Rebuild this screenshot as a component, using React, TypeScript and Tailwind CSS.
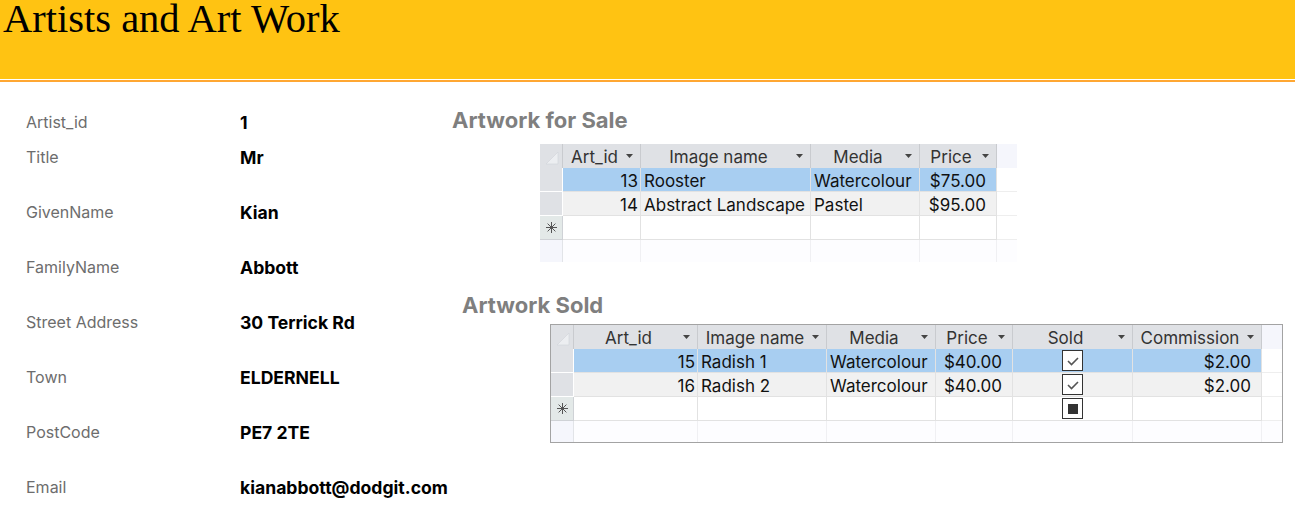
import React from "react";

const ui = "font-['Inter','Liberation_Sans',sans-serif]";

const fields = [
  ["Artist_id", "1"],
  ["Title", "Mr"],
  ["GivenName", "Kian"],
  ["FamilyName", "Abbott"],
  ["Street Address", "30 Terrick Rd"],
  ["Town", "ELDERNELL"],
  ["PostCode", "PE7 2TE"],
  ["Email", "kianabbott@dodgit.com"],
];

type Col = { label: string; align: "num" | "text" | "money" | "check" };

const Arrow = () => (
  <svg width="7" height="4" viewBox="0 0 7 4" className="shrink-0">
    <path d="M0 0h7L3.5 4z" fill="#444" />
  </svg>
);

const Corner = () => (
  <svg width="23" height="24" viewBox="0 0 23 24">
    <path d="M18 8v12H6z" fill="#eceef1" stroke="#d0d3d8" strokeWidth="0.6" />
  </svg>
);

const Star = () => (
  <svg width="11" height="11" viewBox="0 0 11 11">
    <g stroke="#555" strokeWidth="1">
      <path d="M5.5 0v11M0 5.5h11M1.6 1.6l7.8 7.8M9.4 1.6l-7.8 7.8" />
    </g>
  </svg>
);

const Check = ({ mark }: { mark: "tick" | "null" }) => (
  <div className="w-[21px] h-[21px] border-[1.5px] border-[#333] bg-white flex items-center justify-center">
    {mark === "tick" ? (
      <svg width="14" height="14" viewBox="0 0 14 14">
        <path d="M2 7l3.5 3.5L12 4" fill="none" stroke="#555" strokeWidth="1.6" />
      </svg>
    ) : (
      <div className="w-[10px] h-[10px] bg-[#333]" />
    )}
  </div>
);

function Sheet({
  cols,
  grid,
  rows,
  lastRow,
}: {
  cols: Col[];
  grid: string;
  rows: (string | boolean)[][];
  lastRow: string;
}) {
  const cell = "h-[24px] border-r border-b border-[#e2e2e2] flex items-center text-[17px] text-[#111] whitespace-nowrap";
  const body = (vals: (string | boolean | null)[], bg: string, newRow: boolean) =>
    cols.map((c, i) => {
      const v = vals[i];
      if (c.align === "check")
        return (
          <div key={i} className={`${cell} ${bg} justify-center`}>
            {newRow ? <Check mark="null" /> : <Check mark="tick" />}
          </div>
        );
      const al =
        c.align === "num" ? "justify-end pr-[2px]" : c.align === "money" ? "justify-end pr-[10px]" : "pl-[3px]";
      return (
        <div key={i} className={`${cell} ${bg} ${al} pt-[4px]`}>
          {v as string}
        </div>
      );
    });

  return (
    <div className={`grid ${grid} ${ui}`}>
      {/* header */}
      <div className="h-[24px] bg-[#dfe1e5] border-r border-[#c9cbcf]">
        <Corner />
      </div>
      {cols.map((c) => (
        <div key={c.label} className="h-[24px] bg-[#dfe1e5] border-r border-[#c9cbcf] flex items-center pr-[7px] text-[17px] text-[#333]">
          <span className="flex-1 text-center pt-[3px]">{c.label}</span>
          <Arrow />
        </div>
      ))}
      <div className="h-[24px] bg-[#f5f6fc]" />

      {rows.map((r, ri) => {
        const bg = ri === 0 ? "bg-[#a8cef1]" : "bg-[#f1f1f1]";
        return (
          <React.Fragment key={ri}>
            <div className="h-[24px] bg-[#dfe1e5] border-r border-b border-white" />
            {body(r, bg, false)}
            <div className="h-[24px] bg-white border-b border-[#eeeeee]" />
          </React.Fragment>
        );
      })}

      {/* new record row */}
      <div className="h-[24px] bg-[#e3e9e8] border-r border-b border-[#cfd2d6] flex items-center justify-center">
        <Star />
      </div>
      {body(cols.map(() => null), "bg-white", true)}
      <div className="h-[24px] bg-white border-b border-[#eeeeee]" />

      {/* empty area */}
      <div className={`${lastRow} bg-[#f5f6fc] border-r border-[#e2e4e8]`} />
      {cols.map((c) => (
        <div key={c.label} className={`${lastRow} bg-[#fdfdff] border-r border-[#f0f0f3]`} />
      ))}
      <div className={`${lastRow} bg-[#fdfdff]`} />
    </div>
  );
}

export default function App() {
  return (
    <div className="w-[1295px] h-[517px] bg-white overflow-hidden">
      {/* Banner */}
      <header className="h-[82px] bg-[#ffc312] border-b-[3px] border-[#ffa733]">
        <div className="h-[79px] pl-[3px]">
          <h1 className="font-['Liberation_Serif',serif] text-[40.5px] leading-[38px] text-black">
            Artists and Art Work
          </h1>
        </div>
        <div className="h-px bg-white" />
      </header>

      <div className="flex pt-[24px]">
        {/* Left: artist details */}
        <div className={`w-[452px] pl-[26px] pt-[6px] ${ui}`}>
          {fields.map(([label, value], i) => (
            <div key={label} className={`flex ${i === 0 ? "h-[35px]" : "h-[55px]"}`}>
              <div className="w-[214px] text-[16px] leading-[20px] text-[#6d6d6d]">{label}</div>
              <div className="text-[17.6px] leading-[22px] font-bold text-black">{value}</div>
            </div>
          ))}
        </div>

        {/* Right: artwork tables */}
        <div className="flex flex-col">
          <h2 className={`h-[28px] text-[22px] leading-[28px] font-bold text-[#7f7f7f] ${ui}`}>Artwork for Sale</h2>
          <div className="mt-[10px] ml-[88px]">
            <Sheet
              grid="grid-cols-[23px_78px_170px_109px_77px_20px]"
              lastRow="h-[22px]"
              cols={[
                { label: "Art_id", align: "num" },
                { label: "Image name", align: "text" },
                { label: "Media", align: "text" },
                { label: "Price", align: "money" },
              ]}
              rows={[
                ["13", "Rooster", "Watercolour", "$75.00"],
                ["14", "Abstract Landscape", "Pastel", "$95.00"],
              ]}
            />
          </div>

          <h2 className={`mt-[29px] ml-[10px] h-[28px] text-[22px] leading-[28px] font-bold text-[#7f7f7f] ${ui}`}>
            Artwork Sold
          </h2>
          <div className="mt-[5px] ml-[98px] w-[733px] border border-[#a3a3a3]">
            <Sheet
              grid="grid-cols-[23px_124px_129px_109px_77px_120px_129px_20px]"
              lastRow="h-[21px]"
              cols={[
                { label: "Art_id", align: "num" },
                { label: "Image name", align: "text" },
                { label: "Media", align: "text" },
                { label: "Price", align: "money" },
                { label: "Sold", align: "check" },
                { label: "Commission", align: "money" },
              ]}
              rows={[
                ["15", "Radish 1", "Watercolour", "$40.00", true, "$2.00"],
                ["16", "Radish 2", "Watercolour", "$40.00", true, "$2.00"],
              ]}
            />
          </div>
        </div>
      </div>
    </div>
  );
}
